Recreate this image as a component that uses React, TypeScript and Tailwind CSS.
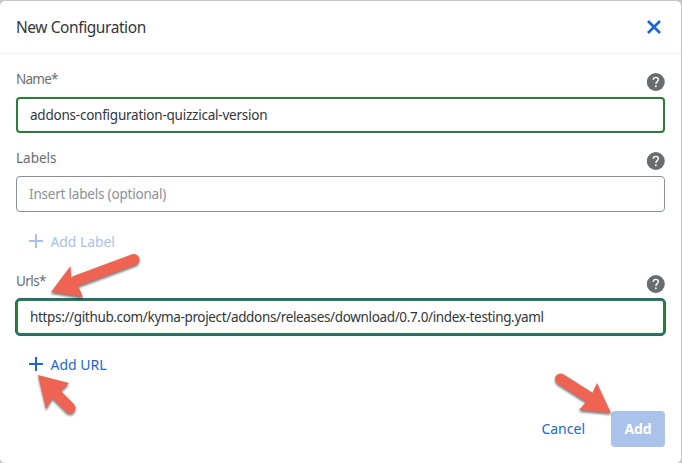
import type { ReactNode } from 'react';

function HelpIcon() {
  return (
    <svg className="mt-[3px] size-[18px] shrink-0" viewBox="0 0 18 18" fill="none">
      <circle cx="8.8" cy="9" r="9" fill="#6a6d70" />
      <path d="M6.2 6.7C6.3 5.2 7.3 4.4 8.8 4.4s2.6.9 2.6 2.2c0 2-2.5 2.1-2.5 4.3" stroke="#fff" strokeWidth="1.4" />
      <circle cx="8.85" cy="13.2" r="0.95" fill="#fff" />
    </svg>
  );
}

function PlusIcon() {
  return (
    <svg className="size-[14px] shrink-0" viewBox="0 0 14 14" fill="none" stroke="currentColor" strokeWidth="2">
      <path d="M7 0v14M0 7h14" />
    </svg>
  );
}

function FieldHeader({ children }: { children: ReactNode }) {
  return (
    <div className="flex h-[27px] items-start justify-between">
      <label className="text-[13.5px] leading-[18px] text-[#6a6d70]">{children}</label>
      <HelpIcon />
    </div>
  );
}

function Arrow({ d, shaft, className }: { d: string; shaft: string; className: string }) {
  return (
    <svg className={`pointer-events-none absolute overflow-visible drop-shadow-[0_2px_1px_rgba(0,0,0,0.5)] ${className}`} fill="#ee6352">
      <path d={shaft} stroke="#ee6352" strokeWidth="11" strokeLinecap="round" />
      <path d={d} />
    </svg>
  );
}

export default function App() {
  return (
    <div className="relative h-[463px] w-[682px] overflow-hidden bg-[#c5c5ca] pt-px font-['Noto_Sans',sans-serif]">
      <main className="flex h-[462px] w-[681px] flex-col rounded-[5px] bg-white">
        <header className="flex h-[53px] items-center justify-between border-b border-[#eeeeef] pr-5 pl-4">
          <h1 className="pt-px text-[15.5px] tracking-[-0.42px] text-[#32363a]"><span>New Configuration</span></h1>
          <svg className="size-[14px]" viewBox="0 0 14 14" stroke="#1967d2" strokeWidth="2.7">
            <path d="M1 1l12 12M13 1L1 13" />
          </svg>
        </header>
        <section className="flex flex-col px-4 pt-4">
          <FieldHeader><span className="tracking-[-0.75px]">Name*</span></FieldHeader>
          <div className="flex h-[36px] w-[649px] items-center rounded-[4px] border-2 border-[#2b7d3a] pl-3 text-[13.5px] text-[#32363a]">
            <span className="tracking-[-0.23px]">addons-configuration-quizzical-version</span>
          </div>
          <div className="h-4" />
          <FieldHeader><span>Labels</span></FieldHeader>
          <div className="flex h-[36px] w-[649px] items-center rounded-[4px] border border-[#89919a] pl-3 text-[13.5px] text-[#89919a]">
            <span className="tracking-[-0.2px]">Insert labels (optional)</span>
          </div>
          <button className="mt-[19px] ml-[12.5px] flex h-5 items-center gap-2 text-[14px] text-[#a9c3ea]">
            <PlusIcon /><span className="tracking-[-0.1px]">Add Label</span>
          </button>
          <div className="h-[21px]" />
          <FieldHeader><span className="tracking-[-0.6px]">Urls*</span></FieldHeader>
          <div className="-mt-px -ml-px flex h-[38px] w-[651px] items-center rounded-[5px] border border-[#1e5fb0] bg-[#2b7d3a] p-[2px]">
            <div className="flex h-full w-full items-center rounded-[2px] bg-white pl-3 text-[13.5px] text-[#32363a]">
              <span className="tracking-[-0.345px]">https://github.com/kyma-project/addons/releases/download/0.7.0/index-testing.yaml</span>
            </div>
          </div>
          <button className="mt-[18px] ml-[12.5px] flex h-5 items-center gap-2 text-[14px] text-[#1967d2]">
            <PlusIcon /><span>Add URL</span>
          </button>
        </section>
        <footer className="mt-[37px] flex h-9 items-center justify-end gap-[26px] pr-4 text-[14px]">
          <button className="pb-0.5 text-[#1967d2]"><span className="tracking-[0px]">Cancel</span></button>
          <button className="h-9 w-[54px] rounded-[4px] bg-[#a9c3ea] pb-0.5 font-bold text-white"><span className="tracking-[-0.15px]">Add</span></button>
        </footer>
      </main>
      <Arrow className="top-[250px] left-[46px] h-[52px] w-[98px]" shaft="M88 9.5L30 31" d="M5 42L24.5 16L25 27L33 38L37 47Z" />
      <Arrow className="top-[370px] left-[34px] h-[52px] w-[45px]" shaft="M36 38L20 22" d="M4 5L35 13L26 22L18 29L12 39Z" />
      <Arrow className="top-[370px] left-[550px] h-[52px] w-[64px]" shaft="M10.5 9L42 29" d="M61 43L47 13L42 24L36 32L29 40Z" />
    </div>
  );
}
